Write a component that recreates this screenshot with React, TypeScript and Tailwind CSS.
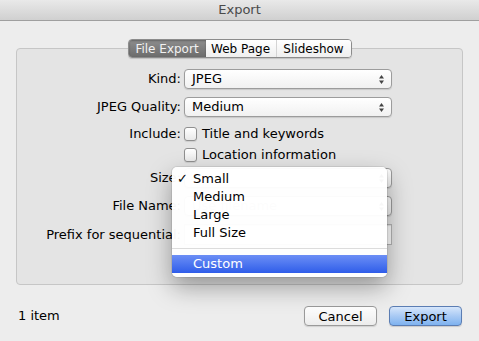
import React from "react";

const font = { fontFamily: '"DejaVu Sans", "Lucida Grande", sans-serif' };

function Arrows() {
  return (
    <svg width="7" height="11" viewBox="0 0 7 11" className="shrink-0">
      <path d="M3.5 1 L6 4.5 L1 4.5 Z" fill="#444" />
      <path d="M3.5 10 L6 6.5 L1 6.5 Z" fill="#444" />
    </svg>
  );
}

function Popup({ value, faint }: { value?: string; faint?: boolean }) {
  return (
    <div className="flex h-[20px] w-[208px] items-center justify-between rounded-[4px] border border-[#9c9c9c] bg-gradient-to-b from-white to-[#f1f1f1] pl-[7px] pr-[6px] shadow-[0_1px_1px_rgba(0,0,0,0.12)]">
      <span className={faint ? "text-[#b4b4b4]" : "text-black"}>{value}</span>
      <Arrows />
    </div>
  );
}

function Checkbox({ label }: { label: string }) {
  return (
    <div className="flex items-center gap-[5px]">
      <span className="h-[14px] w-[13px] rounded-[3px] border border-[#8f8f8f] bg-gradient-to-b from-white to-[#e9e9e9] shadow-[0_1px_1px_rgba(0,0,0,0.1)]" />
      <span>{label}</span>
    </div>
  );
}

const Label = ({ children }: { children?: React.ReactNode }) => (
  <div className="w-[167px] pr-[3px] text-right">{children}</div>
);

export default function App() {
  return (
    <div
      style={font}
      className="relative h-[341px] w-[479px] overflow-hidden bg-[#ededed] text-[13px] text-black"
    >
      {/* title bar */}
      <div className="flex h-[21px] items-center justify-center border-b border-[#9f9f9f] bg-gradient-to-b from-[#e9e9e9] to-[#d0d0d0] text-[13px] text-[#4a4a4a]">
        Export
      </div>

      {/* tab panel */}
      <div className="mx-[16px] mt-[27px] h-[237px] rounded-[4px] border border-[#c6c6c6] bg-[#e4e4e4]">
        <div className="-mt-[10px] flex justify-center">
          <div className="flex h-[19px] overflow-hidden rounded-[4px] border border-[#8c8c8c] text-[12px] shadow-[0_1px_1px_rgba(0,0,0,0.15)]">
            <div className="flex w-[77px] items-center justify-center bg-gradient-to-b from-[#8e8e8e] to-[#6c6c6c] text-[#f2f2f2] shadow-[inset_0_1px_2px_rgba(0,0,0,0.3)]">
              File Export
            </div>
            <div className="flex w-[71px] items-center justify-center border-r border-[#d4d4d4] bg-gradient-to-b from-white to-[#efefef]">
              Web Page
            </div>
            <div className="flex w-[74px] items-center justify-center bg-gradient-to-b from-white to-[#efefef]">
              Slideshow
            </div>
          </div>
        </div>

        <div className="mt-[11px] flex flex-col">
          <div className="flex h-[20px] items-center">
            <Label>Kind:</Label>
            <Popup value="JPEG" />
          </div>
          <div className="mt-[8px] flex h-[20px] items-center">
            <Label>JPEG Quality:</Label>
            <Popup value="Medium" />
          </div>
          <div className="mt-[9px] flex h-[15px] items-center">
            <Label>Include:</Label>
            <Checkbox label="Title and keywords" />
          </div>
          <div className="mt-[6px] flex h-[15px] items-center">
            <Label />
            <Checkbox label="Location information" />
          </div>
          <div className="mt-[6px] flex h-[20px] items-center">
            <Label>Size:</Label>
            <Popup />
          </div>
          <div className="mt-[8px] flex h-[20px] items-center">
            <Label>File Name:</Label>
            <Popup value="Use filename" faint />
          </div>
          <div className="mt-[8px] flex h-[21px] items-center">
            <Label>Prefix for sequential:</Label>
            <div className="h-[21px] w-[208px] border border-[#b4b4b4] bg-white shadow-[inset_0_1px_1px_rgba(0,0,0,0.12)]" />
          </div>
        </div>
      </div>

      {/* bottom bar */}
      <div className="mt-[21px] flex items-center pl-[18px] pr-[17px]">
        <span>1 item</span>
        <div className="ml-auto flex gap-[12px]">
          <button className="h-[20px] w-[73px] rounded-[4px] border border-[#9a9a9a] bg-gradient-to-b from-white to-[#ececec] shadow-[0_1px_1px_rgba(0,0,0,0.12)]">
            Cancel
          </button>
          <button className="h-[20px] w-[73px] rounded-[4px] border border-[#5b7db3] bg-gradient-to-b from-[#d6e6fb] via-[#a9caf4] to-[#7eb2ef] shadow-[0_1px_1px_rgba(0,0,0,0.15)]">
            Export
          </button>
        </div>
      </div>

      {/* open popup menu */}
      <div className="absolute left-[172px] top-[167px] w-[215px] rounded-[5px] bg-white/[0.96] pb-[4px] pt-[3px] shadow-[0_10px_24px_rgba(0,0,0,0.35),0_0_0_1px_rgba(0,0,0,0.08)]">
        {["Small", "Medium", "Large", "Full Size"].map((item, i) => (
          <div key={item} className="flex h-[18px] items-center">
            <span className="w-[21px] pl-[5px] text-[13px]">{i === 0 ? "✓" : ""}</span>
            <span>{item}</span>
          </div>
        ))}
        <div className="my-[6px] h-px bg-[#dcdcdc]" />
        <div className="flex h-[18px] items-center bg-gradient-to-b from-[#6c8ef5] to-[#2f5ce9] text-white">
          <span className="w-[21px]" />
          <span>Custom</span>
        </div>
      </div>
    </div>
  );
}
